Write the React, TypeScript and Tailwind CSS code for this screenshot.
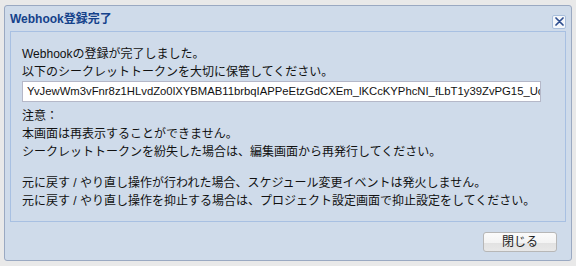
import React from 'react';

const FONT = { fontFamily: '"Liberation Sans", "Noto Sans CJK JP", sans-serif' };

function CloseIcon() {
  return (
    <svg width="9" height="9" viewBox="0 0 9 9">
      <path d="M1 1 L8 8 M8 1 L1 8" stroke="#2f4f8f" strokeWidth="1.7" strokeLinecap="round" />
    </svg>
  );
}

export default function App() {
  return (
    <div className="w-[576px] h-[266px] bg-[#e9e9e9] pt-[5px] pl-[4px]" style={FONT}>
      <div className="w-[568px] h-[256px] border border-[#9aa9c2] rounded-[3px] bg-[#cfdbea] flex flex-col">
        {/* title */}
        <div className="h-[25px] flex items-center justify-between pl-[5px] pr-[5px]">
          <span className="text-[12px] font-bold text-[#15428b] leading-none">Webhook登録完了</span>
          <button className="w-[14px] h-[14px] mt-[6px] flex items-center justify-center bg-[#f4f7fb] border border-[#a9bfdc] rounded-[2px]">
            <CloseIcon />
          </button>
        </div>

        {/* body */}
        <div className="mx-[5px] h-[191px] border border-[#a8c0e2] pt-[13px] pl-[11px] pr-[24px] text-[12px] leading-[18px] text-[#111]">
          <p>Webhookの登録が完了しました。</p>
          <p>以下のシークレットトークンを大切に保管してください。</p>
          <div className="h-[21px] bg-white border border-[#b5b8c8] pl-[4px] overflow-hidden whitespace-nowrap text-[11.3px] leading-[19px]">
            YvJewWm3vFnr8z1HLvdZo0lXYBMAB11brbqIAPPeEtzGdCXEm_lKCcKYPhcNI_fLbT1y39ZvPG15_Uc8aQ
          </div>
          <p className="mt-[5px]">注意：</p>
          <p>本画面は再表示することができません。</p>
          <p>シークレットトークンを紛失した場合は、編集画面から再発行してください。</p>
          <p className="mt-[13px]">元に戻す / やり直し操作が行われた場合、スケジュール変更イベントは発火しません。</p>
          <p>元に戻す / やり直し操作を抑止する場合は、プロジェクト設定画面で抑止設定をしてください。</p>
        </div>

        {/* footer */}
        <div className="flex justify-end pt-[10px] pr-[14px]">
          <button className="w-[74px] h-[20px] border border-[#b7b7b7] rounded-[3px] bg-[linear-gradient(#fbfbfb_0%,#f3f3f3_55%,#e2e2e2_56%,#e8e8e8_100%)] text-[12px] leading-none text-[#222]">
            閉じる
          </button>
        </div>
      </div>
    </div>
  );
}
